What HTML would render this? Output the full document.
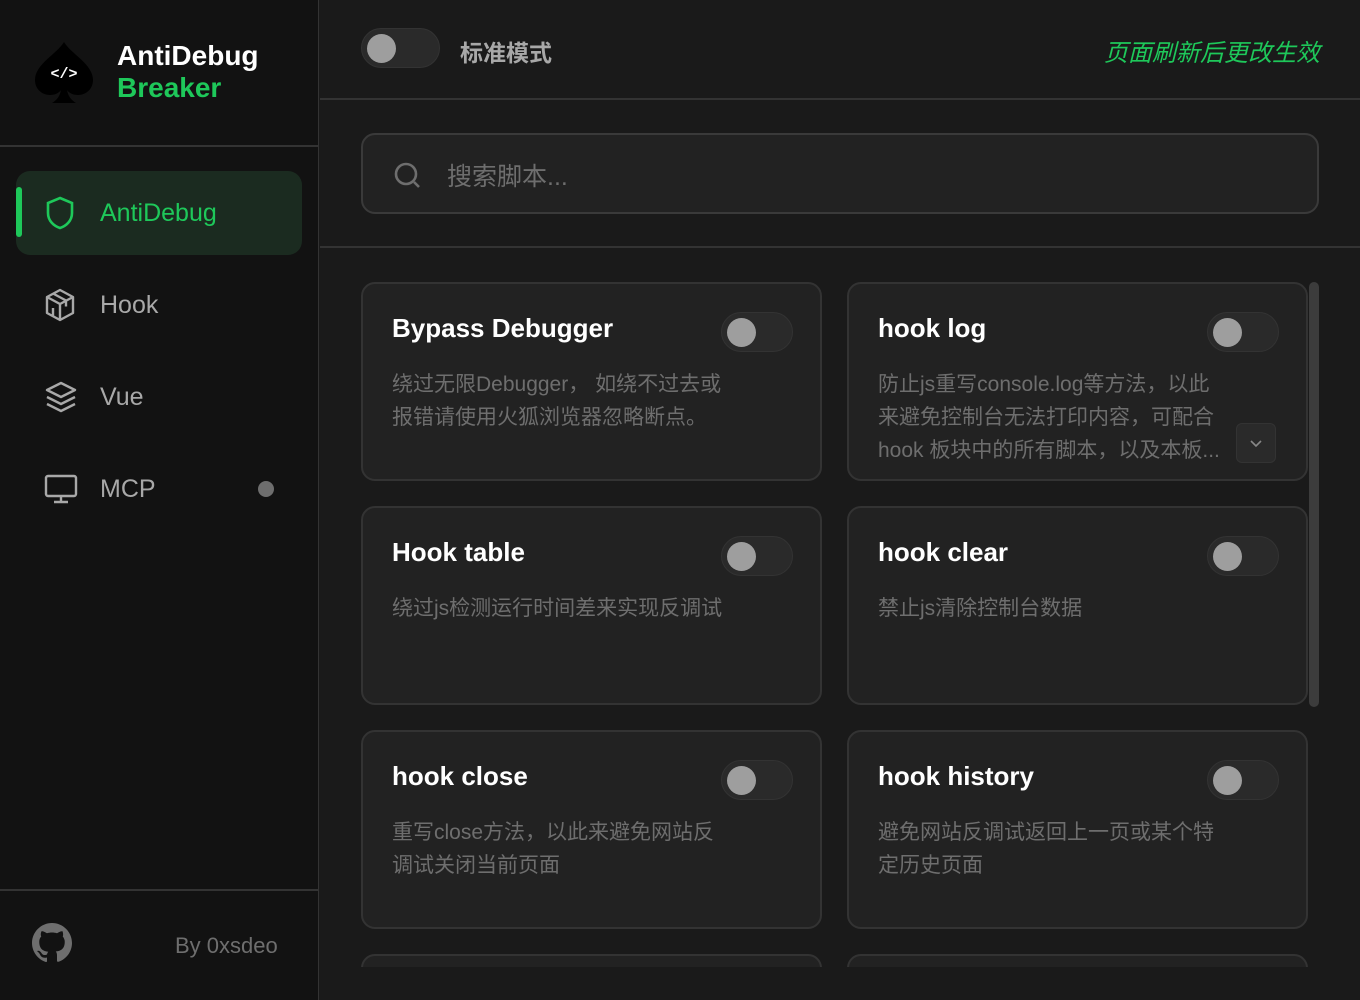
<!DOCTYPE html>
<html><head><meta charset="utf-8"><style>
*{box-sizing:border-box;margin:0;padding:0}
html,body{width:1360px;height:1000px;overflow:hidden}
body{background:#1a1a1a;font-family:"Liberation Sans","Noto Sans CJK SC",sans-serif;position:relative;color:#fff}
.side{position:absolute;left:0;top:0;width:319px;height:1000px;background:#121212;border-right:1px solid #333;overflow:hidden}
.logo{position:absolute;left:33px;top:40px}
.brand{position:absolute;left:117px;top:40px;font-weight:bold;font-size:28px;line-height:32px}
.brand .g{color:#1ec85a}
.hr{position:absolute;left:0;width:318px;height:2px;background:#333}
.nav{position:absolute;left:16px;width:286px;height:84px;display:flex;align-items:center;font-size:25px;color:#a8a8a8}
.nav svg{position:absolute;left:28px}
.nav span{position:absolute;left:84px}
.act{background:#1b2b20;border-radius:14px;color:#1ec85a}
.act:before{content:"";position:absolute;left:0;top:16px;width:6px;height:50px;background:#1ec85a;border-radius:3px}
.dot{position:absolute;left:242px;width:16px;height:16px;border-radius:50%;background:#6e6e6e}
.tg{position:absolute;width:72px;height:40px;border-radius:20px;background:#2a2a2a;border:1px solid #333}
.tg:after{content:"";position:absolute;left:5px;top:5px;width:29px;height:29px;border-radius:50%;background:#9e9e9e}
.main-hr{position:absolute;left:320px;width:1040px;height:2px;background:#333}
.search{position:absolute;left:361px;top:133px;width:958px;height:81px;border:2px solid #3a3a3a;border-radius:14px;background:#222}
.search span{position:absolute;left:84px;top:22px;font-size:25px;color:#6e6e6e}
.clip{position:absolute;left:320px;top:249px;width:1040px;height:718px;overflow:hidden}
.card{position:absolute;width:461px;height:199px;background:#222;border:2px solid #333;border-radius:14px}
.card h3{position:absolute;left:29px;top:29px;font-size:26px;font-weight:bold;color:#fff}
.card p{position:absolute;left:29px;top:84px;font-size:21px;line-height:33px;color:#6e6e6e;white-space:nowrap}
.card .tg{left:358px;top:28px}
.sb{position:absolute;left:989px;top:33px;width:10px;height:425px;border-radius:5px;background:#3c3c3c}
</style></head><body>
<div class="side">
<svg class="logo" width="62" height="64" viewBox="0 0 62 64"><path d="M31 2C24 14 2 24 2 40c0 9 7 15 15 15 5 0 9-2 11-5-1 6-4 10-9 13h24c-5-3-8-7-9-13 2 3 6 5 11 5 8 0 15-6 15-15C60 24 38 14 31 2z" fill="#000"/><text x="31" y="38" font-size="15" font-weight="bold" fill="#fff" text-anchor="middle" font-family="Liberation Mono">&lt;/&gt;</text></svg>
<div class="brand">AntiDebug<br><span class="g">Breaker</span></div>
<div class="hr" style="top:145px"></div>
<div class="nav act" style="top:171px"><svg width="32" height="36" viewBox="0 0 32 36" fill="none" stroke="#1ec85a" stroke-width="2.6"><path d="M16 3l12 5v10c0 8-6 13-12 15C10 31 4 26 4 18V8z"/></svg><span>AntiDebug</span></div>
<div class="nav" style="top:263px"><svg width="32" height="34" viewBox="0 0 32 34" fill="none" stroke="#a8a8a8" stroke-width="2.4" stroke-linejoin="round"><path d="M16 2l13 7v16l-13 7-13-7V9z M3 9l13 7 13-7 M16 16v16 M9 5.5l13 7v6 M9 20v8"/></svg><span>Hook</span></div>
<div class="nav" style="top:355px"><svg width="34" height="34" viewBox="0 0 34 34" fill="none" stroke="#a8a8a8" stroke-width="2.4" stroke-linejoin="round"><path d="M17 3l14 7-14 7-14-7z M3 17l14 7 14-7 M3 24l14 7 14-7"/></svg><span>Vue</span></div>
<div class="nav" style="top:447px"><svg width="34" height="32" viewBox="0 0 34 32" fill="none" stroke="#a8a8a8" stroke-width="2.4"><rect x="2" y="3" width="30" height="20" rx="2"/><path d="M17 23v6 M10 29h14"/></svg><span>MCP</span><div class="dot"></div></div>
<div class="hr" style="top:889px"></div>
<svg style="position:absolute;left:32px;top:923px" width="40" height="40" viewBox="0 0 16 16"><path fill="#6e6e6e" d="M8 0C3.6 0 0 3.6 0 8c0 3.5 2.3 6.5 5.5 7.6.4.1.5-.2.5-.4v-1.4c-2.2.5-2.7-1-2.7-1-.4-.9-.9-1.2-.9-1.2-.7-.5.1-.5.1-.5.8.1 1.2.8 1.200.8.7 1.3 1.9.9 2.3.7.1-.5.3-.9.5-1.1-1.8-.2-3.6-.9-3.6-4 0-.9.3-1.600.8-2.1-.1-.2-.4-1 .1-2.1 0 0 .7-.2 2.2.8.6-.2 1.3-.3 2-.3s1.4.1 2 .3c1.5-1 2.2-.8 2.2-.8.4 1.1.2 1.9.1 2.1.5.6.8 1.3.8 2.1 0 3.1-1.9 3.7-3.6 3.9.3.3.5.8.5 1.5v2.2c0 .2.1.5.6.4C13.7 14.5 16 11.5 16 8c0-4.4-3.6-8-8-8z"/></svg>
<div style="position:absolute;left:175px;top:933px;font-size:22px;color:#6e6e6e">By 0xsdeo</div>
</div>
<div class="tg" style="left:361px;top:28px;width:79px"></div>
<div style="position:absolute;left:460px;top:34px;font-size:23px;font-weight:bold;color:#a8a8a8">标准模式</div>
<div style="position:absolute;left:1104px;top:33px;font-size:24px;font-style:italic;color:#1ec85a;white-space:nowrap">页面刷新后更改生效</div>
<div class="main-hr" style="top:98px"></div>
<div class="search"><svg style="position:absolute;left:30px;top:26px" width="30" height="30" viewBox="0 0 30 30" fill="none" stroke="#6e6e6e" stroke-width="2.6"><circle cx="13" cy="13" r="10"/><path d="M21 21l5 5"/></svg><span>搜索脚本...</span></div>
<div class="main-hr" style="top:246px"></div>
<div class="clip">
<div class="card" style="left:41px;top:33px"><h3>Bypass Debugger</h3><div class="tg"></div><p>绕过无限Debugger， 如绕不过去或<br>报错请使用火狐浏览器忽略断点。</p></div>
<div class="card" style="left:527px;top:33px"><h3>hook log</h3><div class="tg"></div><p>防止js重写console.log等方法，以此<br>来避免控制台无法打印内容，可配合<br>hook 板块中的所有脚本，以及本板...</p><div style="position:absolute;left:387px;top:139px;width:40px;height:40px;border-radius:6px;background:#2a2a2a;border:1px solid #333"><svg width="38" height="38" viewBox="0 0 38 38" fill="none" stroke="#888" stroke-width="1.6"><path d="M14 17l5 5 5-5"/></svg></div></div>
<div class="card" style="left:41px;top:257px"><h3>Hook table</h3><div class="tg"></div><p>绕过js检测运行时间差来实现反调试</p></div>
<div class="card" style="left:527px;top:257px"><h3>hook clear</h3><div class="tg"></div><p>禁止js清除控制台数据</p></div>
<div class="card" style="left:41px;top:481px"><h3>hook close</h3><div class="tg"></div><p>重写close方法，以此来避免网站反<br>调试关闭当前页面</p></div>
<div class="card" style="left:527px;top:481px"><h3>hook history</h3><div class="tg"></div><p>避免网站反调试返回上一页或某个特<br>定历史页面</p></div>
<div class="card" style="left:41px;top:705px"></div>
<div class="card" style="left:527px;top:705px"></div>
<div class="sb"></div>
</div>
</body></html>
